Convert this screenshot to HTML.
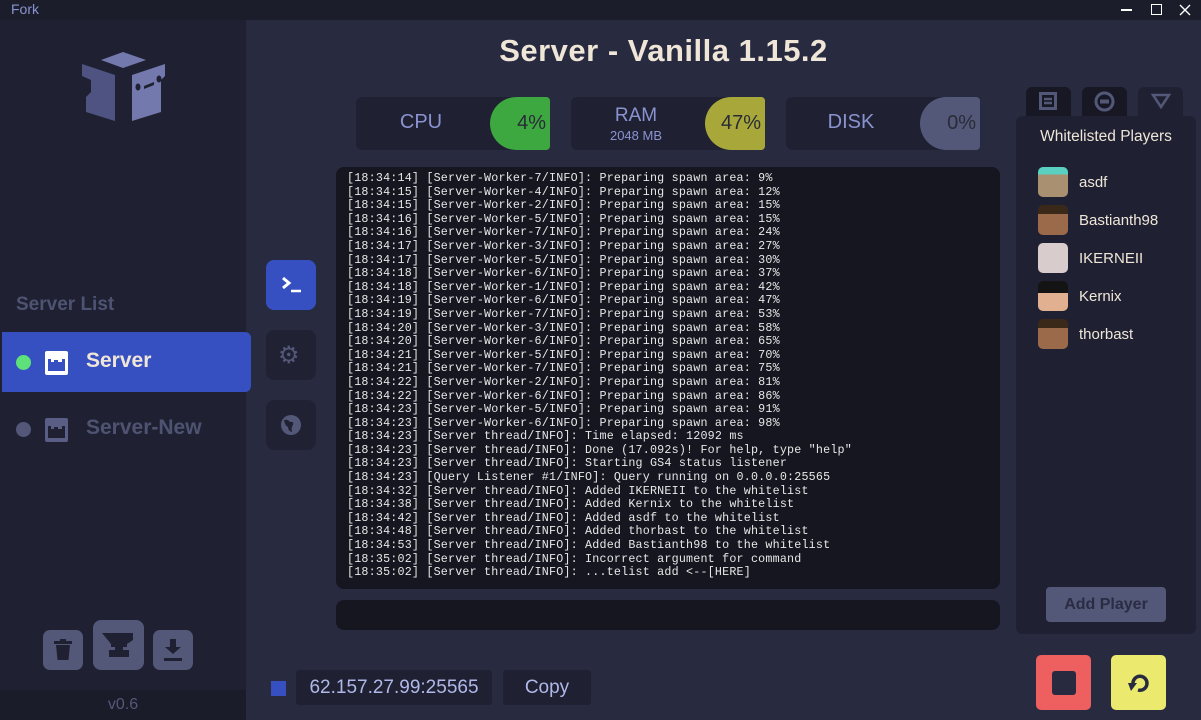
<!DOCTYPE html>
<html><head><meta charset="utf-8"><style>
*{margin:0;padding:0;box-sizing:border-box}
body{width:1201px;height:720px;overflow:hidden;background:#282a40;font-family:"Liberation Sans",sans-serif;position:relative}
.abs{position:absolute}
#title{left:0;top:0;width:1201px;height:20px;background:#1c1d2b}
#side{left:0;top:20px;width:246px;height:700px;background:#1f2133}
.stat{height:53px;width:194px;background:#1f2133;border-radius:6px;top:97px}
.stat .lbl{position:absolute;left:0;width:130px;text-align:center;color:#8a93d0;font-size:20px}
.pill{position:absolute;right:0;top:0;width:60px;height:53px;border-radius:28px 4px 4px 28px;font-size:20px;color:#2a2b36;text-align:right;padding-right:4px;line-height:53px}
#console{left:336px;top:167px;width:664px;height:422px;background:#15161f;border-radius:8px;overflow:hidden}
#console pre{position:absolute;left:11px;top:5px;font-family:"Liberation Mono",monospace;font-size:11.7px;letter-spacing:0.2px;line-height:13.6px;color:#e8e8e8}
.tab{top:87px;width:45px;height:32px;background:#171824;border-radius:6px 6px 0 0}
.side-btn{width:50px;height:50px;border-radius:8px;left:266px;background:#202234}
.pl{position:absolute;left:22px;height:30px;display:flex;align-items:center;color:#efe6d8;font-size:15px}
.av{width:30px;height:30px;border-radius:5px;margin-right:11px}
</style></head><body>
<div id="title" class="abs">
 <div class="abs" style="left:11px;top:1px;color:#8a93d0;font-size:14px">Fork</div>
 <div class="abs" style="left:1121px;top:9px;width:11px;height:2px;background:#fff"></div>
 <div class="abs" style="left:1151px;top:4px;width:11px;height:11px;border:1.5px solid #fff"></div>
 <svg class="abs" style="left:1179px;top:4px" width="12" height="12"><path d="M1 1L11 11M11 1L1 11" stroke="#fff" stroke-width="1.4"/></svg>
</div>
<div class="abs" style="left:0;top:20px;width:2px;height:700px;background:linear-gradient(#c04020 0 10%,#5a9ad0 10% 45%,#4a8a30 45% 60%,#6a4a30 60%)"></div>
<div id="side" class="abs">
 <svg class="abs" style="left:80px;top:32px" width="90" height="72" viewBox="80 52 90 72">
  <path d="M101 60L123 52L146 60L123 68Z" fill="#7479ad"/>
  <path d="M82 64L115 75V121L86 112V97L91 92V80L82 76Z" fill="#4f5382"/>
  <path d="M165 64L132 75V121L161 112V80L165 76Z" fill="#7479ad"/>
  <ellipse cx="138" cy="87" rx="2.5" ry="3.5" fill="#1f2133"/><ellipse cx="159" cy="79" rx="2.5" ry="3.5" fill="#1f2133"/><path d="M144 86L154 82V85L144 89Z" fill="#1f2133"/>
 </svg>
 <div class="abs" style="left:16px;top:274px;font-size:19px;color:#4f5372;font-weight:bold">Server List</div>
 <div class="abs" style="left:2px;top:312px;width:249px;height:60px;background:#3650c2;border-radius:0 6px 6px 0"></div>
 <div class="abs" style="left:16px;top:335px;width:15px;height:15px;border-radius:50%;background:#5ee07a"></div>
 <svg class="abs" style="left:44px;top:331px" width="25" height="24"><path d="M1 2Q1 0 3 0H22Q24 0 24 2V22Q24 24 22 24H3Q1 24 1 22Z M4 8V20H21V8H18V11H14V9H10V11H7V8Z" fill="#fff" fill-rule="evenodd"/></svg>
 <div class="abs" style="left:86px;top:329px;font-size:21px;color:#efe6d8;font-weight:bold">Server</div>
 <div class="abs" style="left:16px;top:402px;width:15px;height:15px;border-radius:50%;background:#545878"></div>
 <svg class="abs" style="left:44px;top:398px" width="25" height="24"><path d="M1 2Q1 0 3 0H22Q24 0 24 2V22Q24 24 22 24H3Q1 24 1 22Z M4 8V20H21V8H18V11H14V9H10V11H7V8Z" fill="#5a5e85" fill-rule="evenodd"/></svg>
 <div class="abs" style="left:86px;top:396px;font-size:21px;color:#4f5372;font-weight:bold">Server-New</div>
 <div class="abs" style="left:43px;top:610px;width:40px;height:40px;border-radius:7px;background:#545878"></div>
 <svg class="abs" style="left:53px;top:618px" width="20" height="24"><path d="M7 1H13V3H19V6H1V3H7Z M3 7H17L15.5 22H4.5Z" fill="#1f2133"/></svg>
 <div class="abs" style="left:93px;top:600px;width:51px;height:50px;border-radius:8px;background:#545878"></div>
 <svg class="abs" style="left:101px;top:610px" width="36" height="30"><path d="M1 3H32V10L26 14V17H22V20H28V27H8V20H14V17H10V14Z" fill="#1f2133"/></svg>
 <div class="abs" style="left:153px;top:610px;width:40px;height:40px;border-radius:7px;background:#545878"></div>
 <svg class="abs" style="left:161px;top:618px" width="24" height="24"><path d="M9 1H15V9H20L12 16L4 9H9Z M3 20H21V23H3Z" fill="#1f2133"/></svg>
 <div class="abs" style="left:0;top:670px;width:246px;height:30px;background:#1b1c2a;color:#545878;font-size:16px;text-align:center;line-height:30px">v0.6</div>
</div>
<div class="abs" style="left:246px;top:33px;width:835px;text-align:center;font-size:31px;font-weight:bold;color:#efe6d8;letter-spacing:0.5px">Server - Vanilla 1.15.2</div>
<div class="abs stat" style="left:356px"><div class="lbl" style="top:14px">CPU</div><div class="pill" style="background:#3da840">4%</div></div>
<div class="abs stat" style="left:571px"><div class="lbl" style="top:8px;font-size:19px">RAM</div><div class="lbl" style="top:31px;font-size:13px">2048 MB</div><div class="pill" style="background:#a8a83a">47%</div></div>
<div class="abs stat" style="left:786px"><div class="lbl" style="top:14px">DISK</div><div class="pill" style="background:#545878">0%</div></div>
<div class="abs side-btn" style="top:260px;background:#3650c2"></div>
<svg class="abs" style="left:281px;top:276px" width="22" height="18"><path d="M2 2L8 7L2 12" stroke="#fff" stroke-width="3" fill="none"/><path d="M10 15H20" stroke="#fff" stroke-width="2.5"/></svg>
<div class="abs side-btn" style="top:330px"></div>
<div class="abs" style="left:278px;top:341px;font-size:24px;color:#545878">⚙</div>
<div class="abs side-btn" style="top:400px"></div>
<svg class="abs" style="left:280px;top:414px" width="22" height="22"><circle cx="11" cy="11" r="10" fill="#545878"/><path d="M4 6Q8 5 10 8Q14 7 13 11Q11 13 12 18Q8 17 8 13Q5 12 4 6Z" fill="#202234"/></svg>
<div id="console" class="abs"><pre>[18:34:14] [Server-Worker-7/INFO]: Preparing spawn area: 9%
[18:34:15] [Server-Worker-4/INFO]: Preparing spawn area: 12%
[18:34:15] [Server-Worker-2/INFO]: Preparing spawn area: 15%
[18:34:16] [Server-Worker-5/INFO]: Preparing spawn area: 15%
[18:34:16] [Server-Worker-7/INFO]: Preparing spawn area: 24%
[18:34:17] [Server-Worker-3/INFO]: Preparing spawn area: 27%
[18:34:17] [Server-Worker-5/INFO]: Preparing spawn area: 30%
[18:34:18] [Server-Worker-6/INFO]: Preparing spawn area: 37%
[18:34:18] [Server-Worker-1/INFO]: Preparing spawn area: 42%
[18:34:19] [Server-Worker-6/INFO]: Preparing spawn area: 47%
[18:34:19] [Server-Worker-7/INFO]: Preparing spawn area: 53%
[18:34:20] [Server-Worker-3/INFO]: Preparing spawn area: 58%
[18:34:20] [Server-Worker-6/INFO]: Preparing spawn area: 65%
[18:34:21] [Server-Worker-5/INFO]: Preparing spawn area: 70%
[18:34:21] [Server-Worker-7/INFO]: Preparing spawn area: 75%
[18:34:22] [Server-Worker-2/INFO]: Preparing spawn area: 81%
[18:34:22] [Server-Worker-6/INFO]: Preparing spawn area: 86%
[18:34:23] [Server-Worker-5/INFO]: Preparing spawn area: 91%
[18:34:23] [Server-Worker-6/INFO]: Preparing spawn area: 98%
[18:34:23] [Server thread/INFO]: Time elapsed: 12092 ms
[18:34:23] [Server thread/INFO]: Done (17.092s)! For help, type "help"
[18:34:23] [Server thread/INFO]: Starting GS4 status listener
[18:34:23] [Query Listener #1/INFO]: Query running on 0.0.0.0:25565
[18:34:32] [Server thread/INFO]: Added IKERNEII to the whitelist
[18:34:38] [Server thread/INFO]: Added Kernix to the whitelist
[18:34:42] [Server thread/INFO]: Added asdf to the whitelist
[18:34:48] [Server thread/INFO]: Added thorbast to the whitelist
[18:34:53] [Server thread/INFO]: Added Bastianth98 to the whitelist
[18:35:02] [Server thread/INFO]: Incorrect argument for command
[18:35:02] [Server thread/INFO]: ...telist add &lt;--[HERE]</pre></div>
<div class="abs" style="left:336px;top:600px;width:664px;height:30px;background:#15161f;border-radius:8px"></div>
<div class="abs" style="left:271px;top:681px;width:15px;height:15px;background:#3650c2"></div>
<div class="abs" style="left:296px;top:670px;width:196px;height:35px;background:#1f2133;border-radius:3px;color:#b0b8e8;font-size:19px;line-height:35px;text-align:center">62.157.27.99:25565</div>
<div class="abs" style="left:503px;top:670px;width:88px;height:35px;background:#1f2133;border-radius:3px;color:#b0b8e8;font-size:19px;line-height:35px;text-align:center">Copy</div>
<div class="abs tab" style="left:1026px"></div><div class="abs tab" style="left:1082px"></div><div class="abs tab" style="left:1138px;background:#1f2133"></div>
<svg class="abs" style="left:1039px;top:92px" width="18" height="18"><rect x="1.5" y="1.5" width="15" height="15" fill="none" stroke="#545878" stroke-width="3"/><path d="M5 7H13M5 11H13" stroke="#545878" stroke-width="2.5"/></svg>
<svg class="abs" style="left:1094px;top:91px" width="21" height="21"><circle cx="10.5" cy="10.5" r="8.5" fill="none" stroke="#545878" stroke-width="3"/><rect x="6" y="8.5" width="9" height="4" fill="#545878"/></svg>
<svg class="abs" style="left:1151px;top:93px" width="20" height="16"><path d="M2 2H18L10 14Z" fill="none" stroke="#545878" stroke-width="2.5"/></svg>
<div class="abs" style="left:1016px;top:116px;width:180px;height:518px;background:#1f2133;border-radius:6px">
 <div class="abs" style="left:0;top:12px;width:180px;text-align:center;color:#efe6d8;font-size:15.5px">Whitelisted Players</div>
 <div class="pl" style="top:51px"><div class="av" style="background:linear-gradient(#5ad0c0 0 25%,#a89070 25%)"></div>asdf</div>
 <div class="pl" style="top:89px"><div class="av" style="background:linear-gradient(#3a2818 0 30%,#9a6a4a 30%)"></div>Bastianth98</div>
 <div class="pl" style="top:127px"><div class="av" style="background:#d8cccc"></div>IKERNEII</div>
 <div class="pl" style="top:165px"><div class="av" style="background:linear-gradient(#141414 0 40%,#e0b090 40%)"></div>Kernix</div>
 <div class="pl" style="top:203px"><div class="av" style="background:linear-gradient(#3a2818 0 30%,#9a6a4a 30%)"></div>thorbast</div>
 <div class="abs" style="left:30px;top:471px;width:120px;height:35px;background:#545878;border-radius:4px;color:#2a2c44;font-size:16px;font-weight:bold;text-align:center;line-height:35px">Add Player</div>
</div>
<div class="abs" style="left:1036px;top:655px;width:55px;height:55px;background:#ee5f5f;border-radius:5px"><div class="abs" style="left:16px;top:16px;width:24px;height:24px;background:#282a40;border-radius:3px"></div></div>
<div class="abs" style="left:1111px;top:655px;width:55px;height:55px;background:#ecea6e;border-radius:5px">
 <svg class="abs" style="left:15px;top:15px" width="26" height="26"><path d="M12 20A7 7 0 1 0 7 14" fill="none" stroke="#282a40" stroke-width="3.5"/><path d="M2 13L11 13L5 21Z" fill="#282a40"/></svg>
</div>
</body></html>
